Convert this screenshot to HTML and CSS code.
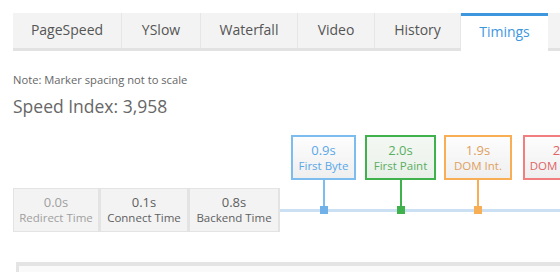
FILE: index.html
```html
<!DOCTYPE html>
<html lang="en">

<head>
  <meta charset="UTF-8" />
  <title>Timings</title>
  <link rel="stylesheet" href="styles.css">
</head>

<body>
  <main class="report">
    <nav class="tabs">
      <a class="tab w-pagespeed">PageSpeed</a>
      <a class="tab w-yslow">YSlow</a>
      <a class="tab w-waterfall">Waterfall</a>
      <a class="tab w-video">Video</a>
      <a class="tab w-history">History</a>
      <a class="tab w-timings is-active">Timings</a>
      <span class="tab-rest"></span>
    </nav>

    <p class="note">Note: Marker spacing not to scale</p>
    <h2 class="speed-index">Speed Index: 3,958</h2>

    <div class="timeline">
      <div class="phases">
        <div class="phase is-muted">
          <span class="value">0.0s</span>
          <span class="label">Redirect Time</span>
        </div>
        <div class="phase">
          <span class="value">0.1s</span>
          <span class="label">Connect Time</span>
        </div>
        <div class="phase">
          <span class="value">0.8s</span>
          <span class="label">Backend Time</span>
        </div>
      </div>
      <div class="track">
        <div class="marker blue w-byte">
          <div class="box">
            <span class="value">0.9s</span>
            <span class="label">First Byte</span>
          </div>
          <span class="stem"></span>
          <span class="dot"></span>
        </div>
        <div class="marker green w-paint">
          <div class="box">
            <span class="value">2.0s</span>
            <span class="label">First Paint</span>
          </div>
          <span class="stem"></span>
          <span class="dot"></span>
        </div>
        <div class="marker orange w-domint">
          <div class="box">
            <span class="value">1.9s</span>
            <span class="label">DOM Int.</span>
          </div>
          <span class="stem"></span>
          <span class="dot"></span>
        </div>
        <div class="marker red w-dom">
          <div class="box">
            <span class="value">2.1s</span>
            <span class="label">DOM Loaded</span>
          </div>
          <span class="stem"></span>
          <span class="dot"></span>
        </div>
      </div>
    </div>

    <div class="panel"></div>
  </main>
</body>

</html>
```

FILE: styles.css
```css
:root {
  /* tab colours */
  --tab-bg: #f3f3f3;
  --tab-line: #e2e2e2;
  --tab-active: #3d97df;

  /* marker colours */
  --blue: #7dbcee;
  --blue-text: #5aa8e8;
  --green: #3fb24d;
  --green-text: #5aae62;
  --orange: #f7ae55;
  --orange-text: #e0a062;
  --red: #f27f7f;
  --red-text: #e06464;

  --track: #cbe1f3;
}

body {
  margin: 0;
  font-family: "Open Sans", "DejaVu Sans", sans-serif;
  color: #555;
  background: #fff;
  overflow: hidden;
}

.report {
  padding: 13px 0 0 13px;
  width: 620px;
}

/* tabs */
.tabs {
  display: flex;
  height: 35px;
  border-bottom: 3px solid var(--tab-line);
}

.tab {
  display: flex;
  align-items: center;
  justify-content: center;
  box-sizing: border-box;
  background: var(--tab-bg);
  border-right: 1px solid #e6e6e6;
  font-size: 14px;
  color: #555;
  padding-bottom: 2px;
}

.tab.is-active {
  background: #fff;
  border-top: 3px solid var(--tab-active);
  border-right: 0;
  color: var(--tab-active);
  height: 38px;
  padding-bottom: 4px;
}

.tab-rest {
  flex: 1;
  background: var(--tab-bg);
}

.w-pagespeed { width: 109px; }
.w-yslow { width: 79px; }
.w-waterfall { width: 97px; }
.w-video { width: 77px; }
.w-history { width: 86px; }
.w-timings { width: 87px; }

.note {
  margin: 21px 0 0;
  font-size: 11.2px;
  color: #666;
  line-height: 16px;
}

.speed-index {
  margin: 6px 0 0;
  font-size: 17.5px;
  font-weight: normal;
  color: #676767;
  line-height: 24px;
}

/* timeline */
.timeline {
  display: flex;
  align-items: flex-start;
  margin-top: 17px;
}

.phases {
  display: flex;
  margin-top: 53px;
}

.phase {
  display: flex;
  flex-direction: column;
  align-items: center;
  justify-content: center;
  box-sizing: border-box;
  height: 44px;
  background: #f3f3f3;
  border: 1px solid #e3e3e3;
  border-right-width: 2px;
  padding: 0 4px;
  color: #606060;
}

.phase:nth-child(1) { width: 87px; }
.phase:nth-child(2) { width: 89px; }
.phase:nth-child(3) { width: 91px; }

.phase.is-muted { color: #a0a0a0; }

.value {
  font-size: 13px;
  line-height: 16px;
}

.label {
  font-size: 11.5px;
  line-height: 16px;
}

.track {
  flex: 1;
  display: flex;
  gap: 8px;
  padding-left: 11px;
  padding-bottom: 18px;
  background: linear-gradient(var(--track), var(--track)) no-repeat left bottom 20px / 100% 3px;
}

.marker {
  display: flex;
  flex-direction: column;
  align-items: center;
}

.box {
  display: flex;
  flex-direction: column;
  align-items: center;
  justify-content: center;
  box-sizing: border-box;
  width: 100%;
  height: 45px;
  border: 2px solid;
  background: linear-gradient(#fdfdfd, #efefef);
}

.stem {
  width: 2px;
  height: 26px;
}

.dot {
  width: 8px;
  height: 8px;
}

.w-byte { width: 65px; }
.w-paint { width: 71px; margin-left: 1px; }
.w-domint { width: 68px; }
.w-dom { width: 84px; margin-left: 3px; }

.blue .box { border-color: var(--blue); color: var(--blue-text); }
.blue .stem, .blue .dot { background: var(--blue); }
.blue .dot { background: #6fb1e8; }

.green .box { border-color: var(--green); color: var(--green-text); background: linear-gradient(#f4f8f4, #e9f0e9); }
.green .stem, .green .dot { background: var(--green); }

.orange .box { border-color: var(--orange); color: var(--orange-text); }
.orange .stem, .orange .dot { background: var(--orange); }

.red .box { border-color: var(--red); color: var(--red-text); }
.red .stem, .red .dot { background: var(--red); }

/* bottom panel */
.panel {
  margin: 30px 0 0 3px;
  height: 40px;
  background: #fafafa;
  border-top: 4px solid #e4e4e4;
  border-left: 3px solid #e4e4e4;
}
```
